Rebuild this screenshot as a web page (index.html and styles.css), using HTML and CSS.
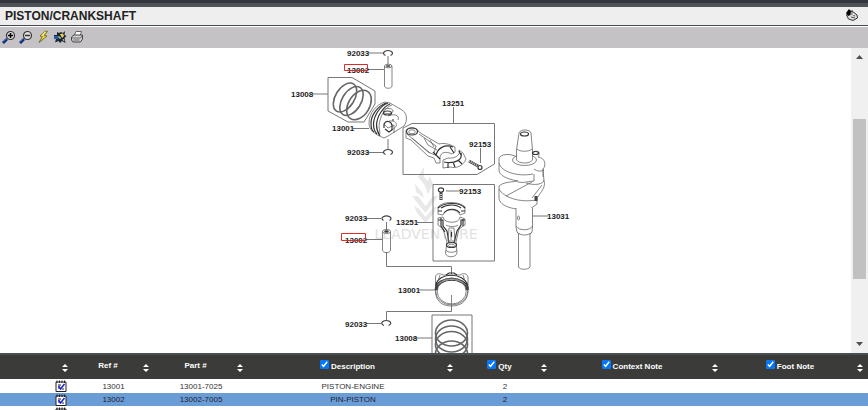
FILE: index.html
```html
<!DOCTYPE html>
<html lang="en">
<head>
<meta charset="utf-8">
<title>PISTON/CRANKSHAFT</title>
<link rel="stylesheet" href="styles.css">
</head>
<body>
<header class="titlebar">
  <h1>PISTON/CRANKSHAFT</h1>
  <button class="icon-btn" aria-label="Notes">
    <svg viewBox="0 0 14 14"><path d="M3 5L7 3L12 7L12.500 10L8 12.500L3.500 11L1.500 7Z" fill="#ddd" stroke="#333"/><path d="M1 5L4 1L6 3L5.500 7L3 8Z" fill="#050505"/><path d="M7 2V7L10 8M6 9L10 10" fill="none" stroke="#555"/><path d="M8 5L9 7L7 8Z" fill="#fff"/></svg>
  </button>
</header>
<nav class="toolbar">
  <button class="icon-btn" aria-label="Zoom in">
    <svg viewBox="0 0 14 14"><path d="M1 13L5 9" stroke="#0b2a7a" stroke-width="2.600"/><path d="M1.500 11.500L4 9" stroke="#3a74d8"/><circle cx="8.500" cy="5.500" r="4" fill="#ddd" stroke="#333" stroke-width="1.200"/><path d="M6 5.500H11M8.500 3V8" stroke="#000" stroke-width="1.500"/></svg>
  </button>
  <button class="icon-btn" aria-label="Zoom out">
    <svg viewBox="0 0 14 14"><path d="M1 13L5 9" stroke="#0b2a7a" stroke-width="2.600"/><path d="M1.500 11.500L4 9" stroke="#3a74d8"/><circle cx="8.500" cy="5.500" r="4" fill="#ddd" stroke="#333" stroke-width="1.200"/><path d="M6 5.500H11" stroke="#333" stroke-width="1.500"/></svg>
  </button>
  <button class="icon-btn" aria-label="Quick view">
    <svg viewBox="0 0 14 14"><path d="M9.500 1L4 6L6.500 6.500L3 12.500L11 6L8 5.500L11.500 1.500Z" fill="#f4dc25" stroke="#5f5720" stroke-width=".8"/><path d="M9 2L6 5.500L8 6" stroke="#fff8a0" fill="none" stroke-width=".8"/></svg>
  </button>
  <button class="icon-btn" aria-label="Hot spots">
    <svg viewBox="0 0 14 14"><path d="M4 2L6 3L8 2L10 3L12 1L11.500 5L13.500 6L11.500 8L12.500 13L9 11L7 13L5.500 11L2 12.500L3 9L1 8V5L4 5Z" fill="#1b2630"/><path d="M1 6H5V9H1Z" fill="#285ca8"/><path d="M7 4L10 3.500L11 6L9 8Z" fill="#e8d34c"/><path d="M5 7H7V9M10 9L11 11" stroke="#ddd" fill="none"/></svg>
  </button>
  <button class="icon-btn" aria-label="Print">
    <svg viewBox="0 0 14 14"><path d="M4 6L6 1.500H11.500L10 6" fill="#fff" stroke="#666"/><path d="M1.500 7L4 5H12.500V9L10.500 12H3L1.500 10Z" fill="#d5d5d5" stroke="#444"/><path d="M2 8H10.500L12 6M3.500 10H9.500" fill="none" stroke="#666"/></svg>
  </button>
</nav>
<main class="pane">
  <div class="canvas">
    <svg class="diagram" viewBox="276 48 300 305" role="img" aria-label="Piston and crankshaft exploded view">
      <g class="mark">
        <path d="M424 167L418 177L424 184L428 194L433 184L430 176L428 181L424 177Z"/>
        <path d="M415 184L422 192L424 198L416 192Z"/>
        <path d="M412 196H418L425.500 206L433 196H438L425.500 213Z"/>
        <path d="M414 206L418 208L425.500 217L433 208L437 206L434 213L425.500 223L417 213Z"/>
        <text x="426" y="239" text-anchor="middle">LEADVENTURE</text>
      </g>
      <g class="lead">
        <path d="M368 53H383M388 56V64M368 69.500H384M312 94H328M353 128.500H369M368 152.500H383M388 139V149M453.500 107V123M480.500 148V163M532 216H548M446 191H459M366 218.500H381M386.500 222V230M366 239.500H382M417 222.500H433M386.500 252V266.500H451.500V274M419 290H435M451.500 295V311.500H386.500V320M366 323.500H381M415 338H432"/>
        <path d="M328 77.500H352L375 91V104L364 122H348L328 111Z"/>
        <path d="M403 128L412 123.500H494.500V164L477 174.500H403Z"/>
        <path d="M433 184.500H494.500V261H433Z"/>
        <path d="M432 360V315H472V360"/>
      </g>
      <g class="line clip">
        <path d="M385.500 55.500A4.500 2.600 0 1 1 390.500 55.500"/>
        <path d="M385.500 154.500A4.500 2.600 0 1 1 390.500 154.500"/>
        <path d="M383.500 220.500A4.500 2.600 0 1 1 389.500 220.500"/>
        <path d="M384 325.500A4.500 2.600 0 1 1 388.500 325.500"/>
      </g>
      <g class="line">
        <path d="M384.500 66V86C384.500 89 392 89 392 86V66"/><ellipse cx="388.200" cy="66" rx="3.700" ry="1.800"/><ellipse class="dark" cx="388.200" cy="66" rx="2" ry=".8"/>
        <path d="M382.500 231.500V250C382.500 253.500 390.500 253.500 390.500 250V231.500"/><ellipse cx="386.500" cy="231.500" rx="4" ry="2"/><ellipse class="dark" cx="386.500" cy="231.500" rx="2" ry="1"/>
      </g>
      <g class="ring">
        <ellipse cx="345" cy="97.500" rx="16" ry="9.500" transform="rotate(-58 345 97.500)"/>
        <ellipse cx="351.500" cy="101" rx="16" ry="9.500" transform="rotate(-58 351.500 101)"/>
        <ellipse cx="359" cy="105" rx="16" ry="10.500" transform="rotate(-58 359 105)"/>
        <ellipse cx="451.500" cy="333" rx="16" ry="13"/>
        <ellipse cx="451.500" cy="339" rx="16" ry="13"/>
        <ellipse cx="451.500" cy="344.500" rx="16" ry="13"/>
        <ellipse cx="451.500" cy="354" rx="16" ry="13"/>
      </g>
      <g class="line">
        <path class="fill" d="M385 102C377 104 369 113 369 123C369 130 374 134 384 138L388 136L404 126C408 120 407 113 402 110L390 103Z"/>
        <path class="bold" d="M386 103C378 106 371 115 371 123C371 128 372 131 374 132M388 103C380 106 374 115 373.500 124C373.500 129 375 132 377 134M390 104C383 107 377 116 376.500 125C376.500 130 378 133 380 136"/>
        <path d="M392 105C385 107 380 116 379 126L380 134M388 116C395 113 400 116 398 120M384 124L388 128L394 125V133M389 121C399 120 398 128 391 130"/>
        <ellipse cx="388" cy="111" rx="5" ry="2.500"/><ellipse class="bold" cx="387.500" cy="113" rx="4" ry="2"/>
        <path class="bold" d="M384 128V124C386 120 391 121 392 125V130L389 132L385 129"/>
        <circle class="dark" cx="393" cy="120" r=".6"/>
      </g>
      <g class="line">
        <path class="fill" d="M406 132C405 127 416 126 418 131L422 134L439 144C446 142 453 146 455 147L455 152L452 154C446 151 441 152 440 157V163H436L434 158L428 156L411 140L406 138Z"/>
        <ellipse class="bold" cx="412" cy="131.500" rx="5.500" ry="3.500"/><ellipse cx="412" cy="131.800" rx="3.300" ry="2"/>
        <path d="M407 134L428 152L435 155M412 138L430 153M419 134L436 146L434 153M424 138L428 145L437 150M430 140L434 147"/>
        <path class="bold" d="M436 156C437 148 445 144 453 147M433 152L440 159M450 147L454 153"/>
        <path class="fill" d="M443 160L448 158C455 159 461 155 459 150L463 153L466 159C464 165 457 169 450 167L443 168Z"/>
        <path class="bold" d="M444 162C455 164 463 160 461 153M448 163V168M453 162L455 167M458 160L462 164M459 151L461 155"/>
        <path class="thick" d="M469 161L478 166"/><path class="thread" d="M469 161L478 166"/><circle class="bold" cx="480" cy="167.500" r="2"/>
      </g>
      <g class="line">
        <path class="thick" d="M441 192V200"/><path class="thread" d="M441 192V200"/><path class="fill bold" d="M438.500 189C439 187.500 443 187.500 443.500 189V191L441 192.500L438.500 191Z"/>
        <path class="fill" d="M438 207C442 201 460 201 465 207V213L460 215C457 208 445 208 443 215L438 214Z"/>
        <path class="bold" d="M438 208C444 202 460 202 465 208M441 208C447 204 456 204 461 208M438 211H442M461 211H465M444 213C448 208 456 208 460 213"/>
        <path class="fill" d="M438 218L443 217C444 224 460 224 460 217L465 219V225L459 229L456 242L457 253C456 258 446 258 445.500 253L447 242L443 229L438 225Z"/>
        <path class="bold" d="M438 220H443V226L447 231L449 243M465 220H461V225L457 231L454 243M441 218V226L445 232M463 219V226"/>
        <path d="M446 225C449 227 456 227 458 225M449 228L448 241H455L454 228ZM451 230V240"/>
        <path class="bold" d="M451.500 232V237"/><ellipse class="bold" cx="451.500" cy="245" rx="5" ry="2.500"/><ellipse cx="451.500" cy="245.500" rx="3" ry="1.300"/><path d="M446 250C447 253 456 253 457 250"/>
      </g>
      <g class="line">
        <path class="fill" d="M435.500 277C436 273 440 273 443 275H460C463 273 467 273 468 277V292C467 302 460 306 451.500 306C443 306 436 302 435.500 292Z"/>
        <path class="bold" d="M436 285C438 272 464 272 467.500 285M435.500 288C438 275 465 275 468 288M436 290C439 277 464 277 468 290M446 275L449 273H454L457 275"/>
        <ellipse cx="451.700" cy="291.500" rx="16" ry="13.500"/><ellipse cx="451.700" cy="291.500" rx="14.500" ry="12.500"/>
        <path class="thick" d="M437 285L436 290M466.500 285L467.500 290"/>
        <path d="M438 281L440 275M465 281L463 275M451.500 295V306"/>
      </g>
      <g class="line">
        <path class="fill" d="M532 153C538 149 541 152 538 157C546 158 546 166 543 169L544 181C546 187 541 192 537 198V204L530 209C515 211 499 206 499 198V186C503 182 512 182 518 181C506 179 499 175 499 170V158C501 154 510 153 517 157Z"/>
        <path d="M499 163C501 172 518 177 533 174M499 189C503 197 519 203 536 200M534 174V181C524 182 525 183 518 182M506 196L532 182M526 183C535 186 544 184 544 180M544 170C540 172 537 171 534 169M532 198L542 185M543 169V177"/>
        <ellipse class="fill" cx="524.500" cy="160" rx="12" ry="5.500"/>
        <path class="fill" d="M516.500 150L519 133C520 129 530 129 531 133L532.500 150V160C530 164 519 164 516.500 160Z"/>
        <ellipse class="bold" cx="524.500" cy="134" rx="4" ry="2"/><path d="M517 149C520 152 529 152 532 149"/>
        <ellipse class="bold" cx="535.500" cy="153" rx="3" ry="1.500"/>
        <path class="thick" d="M536 196V201"/>
        <path class="fill" d="M516 208V227L517 232C519 236 530 236 532 232L532.500 227V208M516 226C519 231 530 231 532.500 226"/>
        <path class="fill" d="M518.500 234V267C520 270 528 270 530 267V234"/>
        <path d="M517 232C520 236 529 236 532 232"/><ellipse cx="518.500" cy="218" rx="1" ry="2"/>
      </g>
      <g class="label">
        <text x="347" y="56">92033</text><text x="347" y="73">13002</text><text x="291" y="97">13008</text>
        <text x="332" y="131">13001</text><text x="347" y="155">92033</text><text x="442" y="106">13251</text>
        <text x="469" y="147">92153</text><text x="547" y="219">13031</text><text x="459" y="194">92153</text>
        <text x="345" y="221">92033</text><text x="345" y="243">13002</text><text x="396" y="225">13251</text>
        <text x="398" y="293">13001</text><text x="345" y="327">92033</text><text x="395" y="341">13008</text>
      </g>
      <path class="hot" d="M344.500 64.500H367.500V70.500H344.500ZM341.500 233.500H365.500V240.500H341.500Z"/>
    </svg>
  </div>
  <div class="scroll">
    <button aria-label="Scroll up"><svg viewBox="0 0 7 4"><path d="M0 4L3.500 0L7 4Z"/></svg></button>
    <div class="track"><div class="thumb"></div></div>
    <button aria-label="Scroll down"><svg viewBox="0 0 7 4"><path d="M0 0L3.500 4L7 0Z"/></svg></button>
  </div>
</main>
<svg class="defs" aria-hidden="true">
  <symbol id="sort" viewBox="0 0 6 8"><path d="M0 3L3 0L6 3ZM0 5H6L3 8Z" fill="#fff"/></symbol>
  <symbol id="note" viewBox="0 0 12 12"><path d="M1 2H11V11.500H1Z" fill="#fff" stroke="#222"/><path d="M2 .5V3M4.500 .5V3M7 .5V3M9.500 .5V3" stroke="#222"/><path d="M3 5H6M3 8H5" stroke="#222"/><path d="M3.500 6L5.500 9L9.500 4" fill="none" stroke="#1522d8" stroke-width="1.500"/><path d="M7 9H9" stroke="#223"/></symbol>
</svg>
<table class="parts">
  <colgroup><col class="c-gap"><col class="c-note"><col class="c-ref"><col class="c-part"><col><col class="c-qty"><col class="c-context"><col class="c-foot"></colgroup>
  <thead>
    <tr>
      <th></th>
      <th><div class="head"><span></span><svg><use href="#sort"/></svg></div></th>
      <th><div class="head"><span>Ref #</span><svg><use href="#sort"/></svg></div></th>
      <th><div class="head"><span>Part #</span><svg><use href="#sort"/></svg></div></th>
      <th><div class="head"><label><input type="checkbox" checked>Description</label><svg><use href="#sort"/></svg></div></th>
      <th><div class="head"><label><input type="checkbox" checked>Qty</label><svg><use href="#sort"/></svg></div></th>
      <th><div class="head"><label><input type="checkbox" checked>Context Note</label><svg><use href="#sort"/></svg></div></th>
      <th><div class="head"><label><input type="checkbox" checked>Foot Note</label><svg><use href="#sort"/></svg></div></th>
    </tr>
  </thead>
  <tbody>
    <tr class="first"><td></td><td><svg class="note"><use href="#note"/></svg></td><td>13001</td><td>13001-7025</td><td>PISTON-ENGINE</td><td>2</td><td></td><td></td></tr>
    <tr class="selected"><td></td><td><svg class="note"><use href="#note"/></svg></td><td>13002</td><td>13002-7005</td><td>PIN-PISTON</td><td>2</td><td></td><td></td></tr>
    <tr><td></td><td><svg class="note"><use href="#note"/></svg></td><td>13008</td><td>13008-6028</td><td>RING-SET-PISTON</td><td>2</td><td></td><td></td></tr>
  </tbody>
</table>
</body>
</html>
```
FILE: styles.css
```css
* { box-sizing: border-box; }
html { height: 100%; overflow: hidden; }
body {
  margin: 0;
  height: 100%;
  overflow: hidden;
  background: #fff;
  color: #333;
  font-family: "Liberation Sans", Arial, sans-serif;
  font-size: 8px;
  border-top: 3px solid #33373d;
}
button { padding: 0; border: 0; background: none; }
.titlebar {
  display: flex;
  align-items: center;
  justify-content: space-between;
  height: 23px;
  padding: 0 9px 2px 5px;
  border-top: 4px solid #505357;
  border-bottom: 1px solid #45484c;
  background: #eee;
}
h1 { margin: 0; padding-top: 2px; font-size: 12px; line-height: 14px; color: #222; }
.icon-btn { display: block; width: 14px; height: 14px; }
.icon-btn svg { display: block; width: 14px; height: 14px; }
.toolbar {
  display: flex;
  align-items: center;
  gap: 3px;
  height: 22px;
  padding: 0 0 2px 2px;
  border-top: 1px solid #fff;
  background: #c5c2c5;
}
.pane { display: flex; }
.canvas { flex: 1; display: flex; justify-content: center; }
.diagram { display: block; width: 300px; height: 305px; }
.diagram path, .diagram ellipse, .diagram circle { fill: none; }
.diagram .mark path { fill: #e8e8e8; }
.mark text { fill: #e2e2e2; font-size: 14px; font-family: "DejaVu Sans", sans-serif; }
.lead { stroke: #777; stroke-width: 1; }
.line { stroke: #666; stroke-width: .8; }
.diagram .line .fill { fill: #fff; }
.line .bold { stroke: #333; stroke-width: 1.2; }
.line .thick { stroke: #444; stroke-width: 3; }
.line .thread { stroke: #ccc; stroke-width: 2; stroke-dasharray: 1 1; }
.diagram .line .dark { fill: #333; }
.clip { stroke: #444; stroke-width: 1.2; }
.ring { stroke: #666; stroke-width: 1.6; }
.label { fill: #222; font-size: 8px; font-weight: bold; }
.hot { stroke: #e02a2a; stroke-width: 1; }
.scroll { display: flex; flex-direction: column; width: 17px; background: #f0f0f0; }
.scroll button { display: flex; align-items: center; justify-content: center; height: 18px; }
.scroll svg { width: 7px; height: 4px; fill: #505050; }
.track { flex: 1; padding: 53px 2px 56px 2px; }
.thumb { height: 100%; min-height: 20px; background: #c1c1c1; }
.defs { display: none; }
.parts {
  width: 100%;
  table-layout: fixed;
  border-collapse: collapse;
  text-align: center;
}
.c-gap { width: 48px; }
.c-note { width: 25px; }
.c-ref { width: 81px; }
.c-part { width: 94px; }
.c-qty { width: 94px; }
.c-context { width: 171px; }
.c-foot { width: 145px; }
thead tr { background: #3b3c39; box-shadow: inset 0 2px #4a504f; }
th { height: 26px; padding: 0; color: #fff; }
.head { display: flex; align-items: center; padding-right: 5px; }
.head span, .head label { flex: 1; line-height: 10px; }
.head svg { width: 6px; height: 8px; margin-top: 3px; }
.head input { width: 9px; height: 9px; margin: 0 2px 0 0; vertical-align: 0; accent-color: #0075ff; }
td { height: 13px; padding: 0; line-height: 13px; }
.first td { height: 14px; }
.selected { background: #6a9dd6; color: #223; }
.note { display: block; width: 12px; height: 12px; margin: 0 auto; }
```
